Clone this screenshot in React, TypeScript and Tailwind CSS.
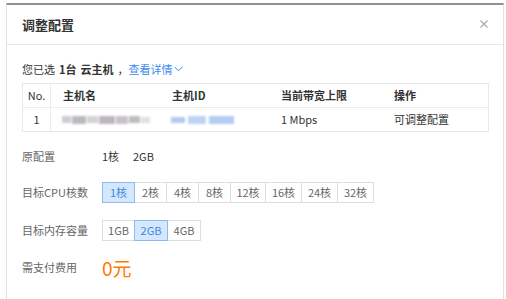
import React from "react";

const font = { fontFamily: '"Noto Sans CJK SC", "Noto Sans", sans-serif' };

function Seg({ opts, sel, widths }: { opts: string[]; sel: number; widths: number[] }) {
  return (
    <div className="flex">
      {opts.map((o, i) => (
        <div
          key={o}
          style={{ width: widths[i] }}
          className={
            "h-[21px] flex items-center justify-center text-[11px] leading-none border " +
            (i > 0 ? "-ml-px " : "") +
            (i === sel
              ? "relative z-10 bg-[#d5e7fc] border-[#8dbbf0] text-[#3d89e6]"
              : "bg-white border-[#dedede] text-[#666]")
          }
        >
          {o}
        </div>
      ))}
    </div>
  );
}

function BlurGray() {
  return (
    <div className="flex items-center gap-[1px] blur-[1.2px]">
      <span className="w-[9px] h-[7px] bg-[#cdcdcd]" />
      <span className="w-[14px] h-[8px] bg-[#bdb7bf]" />
      <span className="w-[11px] h-[7px] bg-[#d2d2d2]" />
      <span className="w-[16px] h-[8px] bg-[#bcb6be]" />
      <span className="w-[12px] h-[8px] bg-[#c6c2c8]" />
      <span className="w-[11px] h-[7px] bg-[#bdbdbd]" />
      <span className="w-[9px] h-[6px] bg-[#e0e0e0]" />
    </div>
  );
}

function BlurBlue() {
  return (
    <div className="flex items-center gap-[3px] blur-[1.2px]">
      <span className="w-[14px] h-[6px] bg-[#b2caf2]" />
      <span className="w-[18px] h-[8px] bg-[#c0d2f4]" />
      <span className="w-[25px] h-[8px] bg-[#b4cbf2]" />
    </div>
  );
}

export default function App() {
  return (
    <div className="w-[506px] h-[299px] bg-white overflow-hidden pt-[3px] pl-[6px]" style={font}>
      <div className="w-[498px] h-[296px] border-t-2 border-t-[#8f8f8f] border-x border-x-[#e2e2e2] bg-white">
        <div className="h-[40px] border-b border-[#e9e9e9] flex items-center justify-between pl-[15px] pr-[15px]">
          <span className="text-[13px] leading-none font-bold text-[#333]">调整配置</span>
          <svg width="8" height="8" viewBox="0 0 8 8" className="mt-[-1px]">
            <path d="M0.5 0.5 L7.5 7.5 M7.5 0.5 L0.5 7.5" stroke="#a8a8a8" strokeWidth="1.1" />
          </svg>
        </div>
        <div className="pl-[15px] pr-[14px] pt-[14px]">
          <div className="h-[20px] flex items-center text-[11px] text-[#333]">
            <span className="mr-[4px]">您已选</span>
            <span className="font-bold">1台</span>
            <span className="font-bold ml-[4px]">云主机</span>
            <span className="ml-[4px] mr-[0px]">，</span>
            <span className="text-[#3b8af0]">查看详情</span>
            <svg width="9" height="6" viewBox="0 0 9 6" className="ml-[1px]">
              <path d="M0.5 0.8 L4.5 4.8 L8.5 0.8" stroke="#3b8af0" fill="none" strokeWidth="1" />
            </svg>
          </div>
          <div className="mt-[4px] border border-[#e8e8e8] text-[11px] text-[#333]">
            <div className="grid grid-cols-[28px_109px_109px_113px_1fr] h-[24px] border-b border-[#ececec] items-stretch">
              <div className="border-r border-[#ececec] flex items-center justify-center">No.</div>
              <div className="pl-[12px] flex items-center font-bold">主机名</div>
              <div className="pl-[12px] flex items-center font-bold">主机ID</div>
              <div className="pl-[12px] flex items-center font-bold">当前带宽上限</div>
              <div className="pl-[12px] flex items-center font-bold">操作</div>
            </div>
            <div className="grid grid-cols-[28px_109px_109px_113px_1fr] h-[23px] items-stretch">
              <div className="border-r border-[#ececec] flex items-center justify-center">1</div>
              <div className="pl-[11px] flex items-center">
                <BlurGray />
              </div>
              <div className="pl-[11px] flex items-center">
                <BlurBlue />
              </div>
              <div className="pl-[12px] flex items-center">1 Mbps</div>
              <div className="pl-[12px] flex items-center">可调整配置</div>
            </div>
          </div>

          <div className="mt-[14px] h-[20px] flex items-center text-[11px]">
            <span className="w-[80px] text-[#666]">原配置</span>
            <span className="w-[31px] text-[#333]">1核</span>
            <span className="text-[#333]">2GB</span>
          </div>

          <div className="mt-[16px] flex items-center text-[11px]">
            <span className="w-[80px] text-[#666]">目标CPU核数</span>
            <Seg
              opts={["1核", "2核", "4核", "8核", "12核", "16核", "24核", "32核"]}
              sel={0}
              widths={[33, 33, 33, 33, 36, 37, 37, 37]}
            />
          </div>

          <div className="mt-[17px] flex items-center text-[11px]">
            <span className="w-[80px] text-[#666]">目标内存容量</span>
            <Seg opts={["1GB", "2GB", "4GB"]} sel={1} widths={[33, 34, 34]} />
          </div>

          <div className="mt-[14px] h-[24px] flex items-center">
            <span className="w-[80px] text-[11px] text-[#666]">需支付费用</span>
            <span className="text-[19px] leading-none text-[#ff7a00]">0元</span>
          </div>
        </div>
      </div>
    </div>
  );
}
